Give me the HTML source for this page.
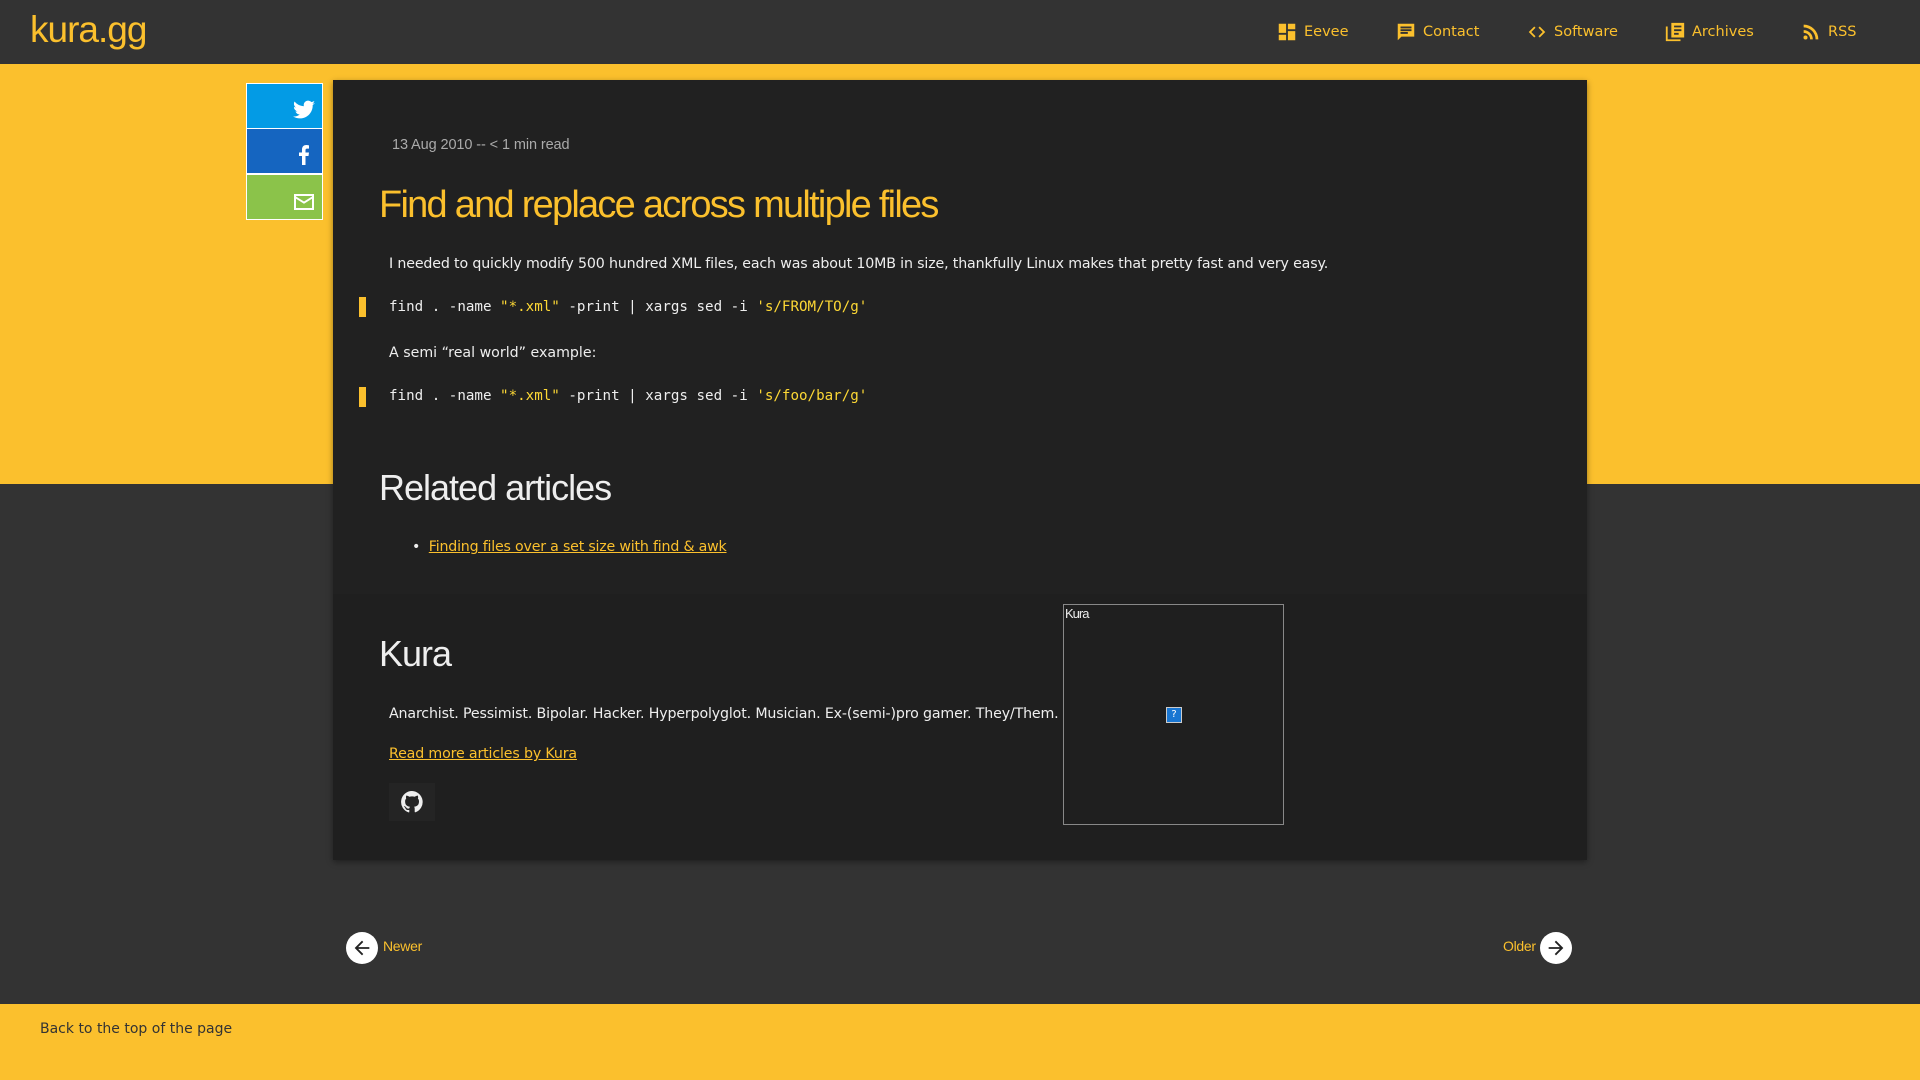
<!DOCTYPE html>
<html><head><meta charset="utf-8"><style>
*{margin:0;padding:0;box-sizing:border-box}
body{width:1920px;height:1080px;overflow:hidden;background:#333;font-family:"DejaVu Sans",sans-serif;position:relative}
.abs{position:absolute}
#hdr{left:0;top:0;width:1920px;height:64px;background:#333}
#logo{left:30px;top:9px;font-family:"Liberation Sans",sans-serif;font-size:37px;color:#fbc02d;letter-spacing:-1px}
.nav{top:21px;font-size:14.5px;color:#fbc02d;display:flex;align-items:center;gap:6px;white-space:nowrap}
.nav svg{width:22px;height:22px;fill:#fbc02d}
#yel{left:0;top:64px;width:1920px;height:420px;background:#fbc02d}
#foot{left:0;top:1004px;width:1920px;height:76px;background:#fbc02d}
#card{left:333px;top:80px;width:1254px;height:780px;background:#212121;box-shadow:0 2px 6px rgba(0,0,0,.4)}
#auth{left:333px;top:594px;width:1254px;height:266px;background:#1f1f1f}
.sh{left:246px;width:77px;height:46px;border:1px solid #fff}
.sh svg{position:absolute;right:6px;top:12px;width:24px;height:24px;fill:#fff}
.p{color:#eee;font-size:14.2px;white-space:nowrap}
.code{font-family:"DejaVu Sans Mono",monospace;font-size:14.2px;color:#eee;white-space:pre}
.code .s{color:#fdd835}
.bar{left:359px;width:7px;height:20px;background:#fbc02d}
.h{font-family:"Liberation Sans",sans-serif;color:#eee;letter-spacing:-1px}
a{color:#fbc02d}
</style></head><body>
<div id="hdr" class="abs"></div>
<div id="logo" class="abs">kura.gg</div>
<div class="abs nav" style="left:1276px"><svg viewBox="0 0 24 24"><path d="M3 3h8v10H3zM13 3h8v6h-8zM13 11h8v10h-8zM3 15h8v6H3z"/></svg>Eevee</div>
<div class="abs nav" style="left:1395px"><svg viewBox="0 0 24 24"><path d="M3 3h18v14H7l-4 4zM6 6v2h12V6zm0 3v2h12V9zm0 3v2h8v-2z"/></svg>Contact</div>
<div class="abs nav" style="left:1526px"><svg viewBox="0 0 24 24"><path d="M9 6l-6 6 6 6 1.4-1.4L5.8 12l4.6-4.6zm6 0l-1.4 1.4 4.6 4.6-4.6 4.6L15 18l6-6z"/></svg>Software</div>
<div class="abs nav" style="left:1664px"><svg viewBox="0 0 24 24"><path d="M4 6H2v16h16v-2H4zm4-4h14v16H8zm3 3v2h8V5zm0 4v2h8V9zm0 4v2h5v-2z"/></svg>Archives</div>
<div class="abs nav" style="left:1800px"><svg viewBox="0 0 24 24"><circle cx="6" cy="18" r="2.2"/><path d="M4 10v3a7 7 0 017 7h3A10 10 0 004 10zm0-6v3a13 13 0 0113 13h3A16 16 0 004 4z"/></svg>RSS</div>
<div id="yel" class="abs"></div>
<div id="foot" class="abs"></div>
<div class="abs" style="left:40px;top:1021px;font-size:14px;color:#333">Back to the top of the page</div>
<div class="abs sh" style="top:83px;background:#039be5"><svg viewBox="0 0 24 24" style="top:14px"><path d="M23 5a9 9 0 01-2.6.7A4.5 4.5 0 0022.4 3a9 9 0 01-2.9 1.1 4.5 4.5 0 00-7.7 4.1A12.8 12.8 0 012.5 3.5a4.5 4.5 0 001.4 6 4.5 4.5 0 01-2-.6 4.5 4.5 0 003.6 4.4 4.5 4.5 0 01-2 .1 4.5 4.5 0 004.2 3.1A9 9 0 011 18.4 12.8 12.8 0 007.9 20.4c8.3 0 12.8-6.9 12.8-12.8v-.6A9 9 0 0023 5z"/></svg></div>
<div class="abs sh" style="top:128px;background:#1565c0"><svg viewBox="0 0 24 24" style="top:13px"><path d="M13.5 23v-9h3l.5-3.5h-3.5V8.3c0-1 .3-1.7 1.8-1.7H17V3.4A25 25 0 0014.4 3C11.8 3 10 4.6 10 7.5v3H7V14h3v9z"/></svg></div>
<div class="abs sh" style="top:174px;background:#8bc34a"><svg viewBox="0 0 24 24" style="top:15px"><path d="M2 4h20v16H2zm2 2v.5l8 5 8-5V6zm0 2.8V18h16V8.8l-8 5z"/></svg></div>
<div id="card" class="abs"></div>
<div id="auth" class="abs"></div>
<div class="abs" style="left:392px;top:137px;font-family:'Liberation Sans',sans-serif;font-size:14.5px;color:#aaa;letter-spacing:-.1px">13 Aug 2010 -- &lt; 1 min read</div>
<div class="abs h" style="left:379px;top:184px;font-size:38px;color:#fbc02d;letter-spacing:-1.75px">Find and replace across multiple files</div>
<div class="abs p" style="left:389px;top:256px;letter-spacing:-.15px">I needed to quickly modify 500 hundred XML files, each was about 10MB in size, thankfully Linux makes that pretty fast and very easy.</div>
<div class="abs bar" style="top:297px"></div>
<div class="abs code" style="left:389px;top:299px">find . -name <span class="s">"*.xml"</span> -print | xargs sed -i <span class="s">'s/FROM/TO/g'</span></div>
<div class="abs p" style="left:389px;top:345px">A semi “real world” example:</div>
<div class="abs bar" style="top:387px"></div>
<div class="abs code" style="left:389px;top:388px">find . -name <span class="s">"*.xml"</span> -print | xargs sed -i <span class="s">'s/foo/bar/g'</span></div>
<div class="abs h" style="left:379px;top:467px;font-size:36px;letter-spacing:-1px">Related articles</div>
<div class="abs p" style="left:412px;top:539px;letter-spacing:-.2px">•&nbsp;&nbsp;<a href="#">Finding files over a set size with find &amp; awk</a></div>
<div class="abs h" style="left:379px;top:633px;font-size:36px">Kura</div>
<div class="abs p" style="left:389px;top:706px;letter-spacing:-.15px">Anarchist. Pessimist. Bipolar. Hacker. Hyperpolyglot. Musician. Ex-(semi-)pro gamer. They/Them.</div>
<div class="abs p" style="left:389px;top:746px;letter-spacing:-.15px"><a href="#">Read more articles by Kura</a></div>
<div class="abs" style="left:389px;top:783px;width:46px;height:38px;background:#242424"><svg viewBox="0 0 24 24" style="position:absolute;left:11px;top:7px;width:24px;height:24px;fill:#eee"><path d="M12 1a11 11 0 00-3.5 21.4c.6.1.8-.2.8-.5v-2c-3 .7-3.7-1.3-3.7-1.3-.5-1.3-1.2-1.6-1.2-1.6-1-.7.1-.7.1-.7 1.1.1 1.700 1.1 1.7 1.1 1 1.7 2.6 1.2 3.2.9.1-.7.4-1.2.7-1.5-2.400-.3-5-1.2-5-5.4 0-1.2.4-2.2 1.1-2.9-.1-.3-.5-1.4.1-2.9 0 0 .9-.3 3 1.1a10.4 10.4 0 015.5 0c2.1-1.4 3-1.1 3-1.1.6 1.5.2 2.6.1 2.9.7.8 1.1 1.7 1.1 2.9 0 4.2-2.6 5.1-5 5.4.4.3.7 1 .7 2v3c0 .3.2.6.8.5A11 11 0 0012 1z"/></svg></div>
<div class="abs" style="left:1063px;top:604px;width:221px;height:221px;border:1px solid #888">
<div style="position:absolute;left:1px;top:1px;font-family:'Liberation Sans',sans-serif;font-size:13px;color:#eee;letter-spacing:-1px">Kura</div>
<div style="position:absolute;left:102px;top:102px;width:16px;height:16px;border:1px solid #ccc;background:#1976d2;color:#fff;font-size:10px;text-align:center;line-height:14px">?</div></div>
<div class="abs" style="left:346px;top:932px;width:32px;height:32px;border-radius:50%;background:#fff"><svg viewBox="0 0 24 24" style="position:absolute;left:5px;top:5px;width:22px;height:22px;fill:#222"><path d="M20 11H7.8l5.6-5.6L12 4l-8 8 8 8 1.4-1.4L7.8 13H20z"/></svg></div>
<div class="abs" style="left:383px;top:938px;font-family:'Liberation Sans',sans-serif;font-size:14px;color:#fbc02d;letter-spacing:-.3px">Newer</div>
<div class="abs" style="left:1540px;top:932px;width:32px;height:32px;border-radius:50%;background:#fff"><svg viewBox="0 0 24 24" style="position:absolute;left:5px;top:5px;width:22px;height:22px;fill:#222"><path d="M4 11h12.2l-5.6-5.6L12 4l8 8-8 8-1.4-1.4 5.6-5.6H4z"/></svg></div>
<div class="abs" style="left:1503px;top:938px;font-family:'Liberation Sans',sans-serif;font-size:14px;color:#fbc02d;letter-spacing:-.3px">Older</div>
</body></html>
